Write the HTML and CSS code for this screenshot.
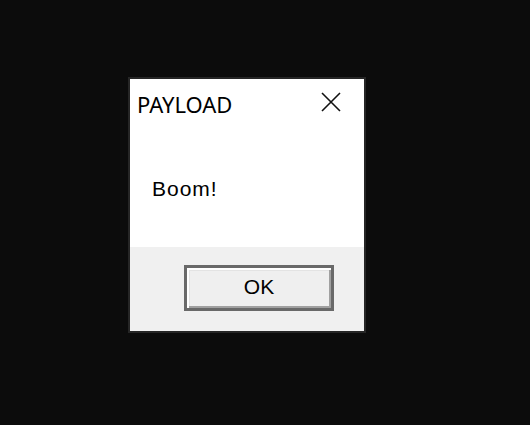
FILE: index.html
```html
<!DOCTYPE html>
<html>
<head>
<meta charset="utf-8">
<link rel="stylesheet" href="styles.css">
</head>
<body>
<div class="stage">
  <div class="dialog">
    <div class="content">
      <div class="titlebar">
        <span class="title">PAYLOAD</span>
        <svg class="close" width="20" height="20" viewBox="0 0 20 20">
          <path d="M1 1 L19 19 M19 1 L1 19" stroke="#111" stroke-width="1.6" fill="none"/>
        </svg>
      </div>
      <div class="message">Boom!</div>
    </div>
    <div class="footer">
      <div class="btn">OK</div>
    </div>
  </div>
</div>
</body>
</html>
```
FILE: styles.css
```css
html, body {
  margin: 0;
  background: #0c0c0c;
}
.stage {
  height: 425px;
  box-sizing: border-box;
  padding: 77px 0 0 128px;
}
.dialog {
  width: 234px;
  border: 2px solid #262626;
  background: #fff;
}
.content {
  height: 168px;
  box-sizing: border-box;
  padding-top: 12px;
}
.titlebar {
  display: flex;
  justify-content: space-between;
  align-items: flex-start;
  height: 28px;
  padding-left: 7px;
  padding-right: 23px;
}
.title {
  font-family: "Noto Sans", sans-serif;
  font-size: 22px;
  line-height: 26px;
  color: #000;
}
.close {
  margin-top: 1px;
  display: block;
}
.message {
  margin-top: 58px;
  padding-left: 22px;
  font-family: "Liberation Sans", sans-serif;
  font-size: 21px;
  line-height: 24px;
  letter-spacing: 1px;
  color: #000;
}
.footer {
  height: 84px;
  box-sizing: border-box;
  background: #f0f0f0;
  padding: 18px 0 0 54px;
}
.btn {
  width: 150px;
  height: 46px;
  box-sizing: border-box;
  border: 3px solid #696969;
  background: #efefef;
  box-shadow: inset 2px 2px 0 #fff, inset -2px -2px 0 #a0a0a0, inset 3px 3px 0 #e3e3e3;
  display: flex;
  align-items: center;
  justify-content: center;
  font-family: "Liberation Sans", sans-serif;
  font-size: 21px;
  line-height: 24px;
  color: #000;
  padding-bottom: 2px;
}
```
